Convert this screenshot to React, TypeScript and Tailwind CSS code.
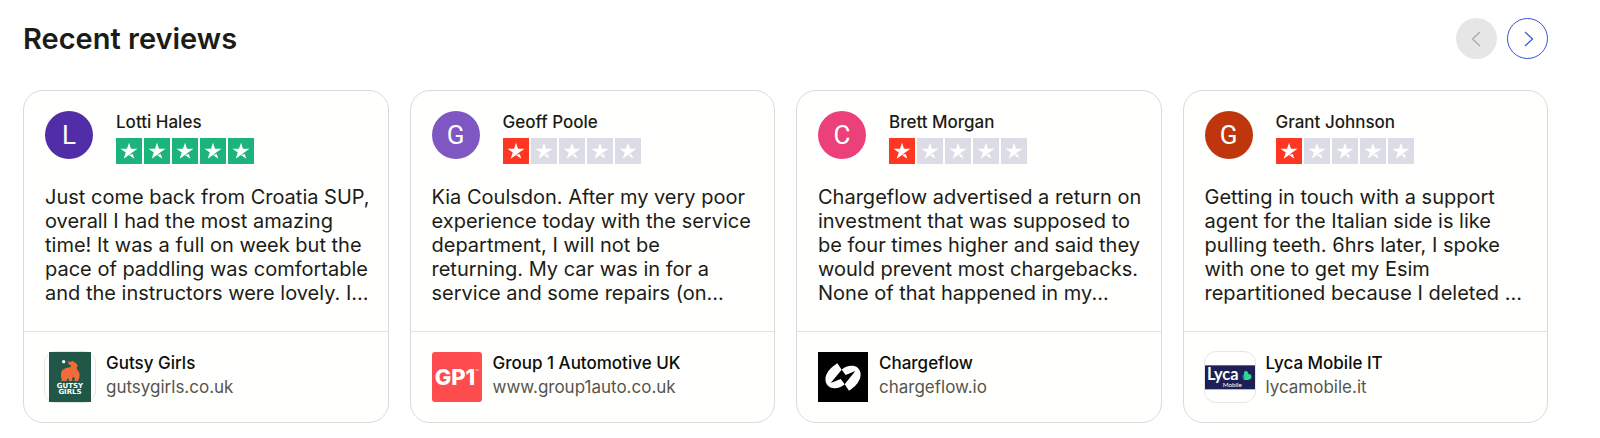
import { ReactNode } from "react";

function GutsyGirlsLogo() {
  return (
    <svg viewBox="0 0 150 150" className="size-full" aria-hidden="true">
      <rect x="12" width="126" height="150" fill="#205746" />
      <circle cx="56" cy="29" r="5" fill="#fff" />
      <path
        d="M69 28 L76 30 L82 27 L88 30 L95 35 L98 41 L95 47 L97 53 L102 60 L104 68 L103 77 L99 87 L87 87 L90 79 L86 75 L81 79 L82 87 L71 87 L72 80 L67 80 L64 87 L49 87 L50 80 L48 74 L48 62 L53 53 L63 48 L76 46 L79 41 L71 37 Z"
        fill="#f26b3a"
      />
      <text x="75" y="109" textAnchor="middle" fontFamily="'DejaVu Sans', sans-serif" fontWeight="700" fontSize="21" fill="#fff">GUTSY</text>
      <text x="75" y="127" textAnchor="middle" fontFamily="'DejaVu Sans', sans-serif" fontWeight="700" fontSize="21" fill="#fff">GIRLS</text>
    </svg>
  );
}

function Group1Logo() {
  return (
    <svg viewBox="0 0 150 150" className="size-full" aria-hidden="true">
      <rect width="150" height="150" rx="9" fill="#ff4c4f" />
      <text x="69" y="100" textAnchor="middle" fontFamily="Inter, sans-serif" fontWeight="800" fontSize="66" fill="#fff">GP1</text>
      <path d="M131 54h10" stroke="#fff" strokeWidth="2" />
    </svg>
  );
}

function ChargeflowLogo() {
  return (
    <svg viewBox="0 0 150 150" className="size-full" aria-hidden="true">
      <rect width="150" height="150" fill="#000" />
      <path d="M58 34 L71 53 L38 93 L68 81 L80 97 C66 110 44 113 32 103 C22 94 20 80 25 68 C32 52 45 42 58 34 Z" fill="#fff" />
      <path d="M93 116 L80 97 L112 57 L83 69 L71 53 C84 40 107 37 119 47 C129 56 130 70 125 82 C118 98 106 108 93 116 Z" fill="#fff" />
    </svg>
  );
}

function LycaLogo() {
  return (
    <svg viewBox="0 0 150 150" className="size-full" aria-hidden="true">
      <rect y="40" width="150" height="72" fill="#1e1f55" />
      <text x="6" y="84" fontFamily="Lato, sans-serif" fontWeight="700" fontSize="49" fill="#fff">Lyca</text>
      <text x="53" y="104" fontFamily="Lato, sans-serif" fontSize="19" fill="#fff">Mobile</text>
      <path d="M118 66 C109 68 111 80 117 84 L129 84 Z" fill="#1a6fe0" />
      <path d="M117 61 C121 53 130 57 130 66 C138 64 143 74 137 80 C133 84 125 84 118 84 Z" fill="#2bd98a" />
    </svg>
  );
}

type Review = {
  name: string;
  initial: string;
  avatar: string;
  rating: number;
  text: string;
  company: string;
  site: string;
  logo: ReactNode;
  framed: boolean;
};

const reviews: Review[] = [
  {
    name: "Lotti Hales",
    initial: "L",
    avatar: "bg-[#512da8]",
    rating: 5,
    text: "Just come back from Croatia SUP,\noverall I had the most amazing\ntime! It was a full on week but the\npace of paddling was comfortable\nand the instructors were lovely. I...",
    company: "Gutsy Girls",
    site: "gutsygirls.co.uk",
    logo: <GutsyGirlsLogo />,
    framed: true,
  },
  {
    name: "Geoff Poole",
    initial: "G",
    avatar: "bg-[#7e57c2]",
    rating: 1,
    text: "Kia Coulsdon. After my very poor\nexperience today with the service\ndepartment, I will not be\nreturning. My car was in for a\nservice and some repairs (on...",
    company: "Group 1 Automotive UK",
    site: "www.group1auto.co.uk",
    logo: <Group1Logo />,
    framed: false,
  },
  {
    name: "Brett Morgan",
    initial: "C",
    avatar: "bg-[#ec407a]",
    rating: 1,
    text: "Chargeflow advertised a return on\ninvestment that was supposed to\nbe four times higher and said they\nwould prevent most chargebacks.\nNone of that happened in my...",
    company: "Chargeflow",
    site: "chargeflow.io",
    logo: <ChargeflowLogo />,
    framed: false,
  },
  {
    name: "Grant Johnson",
    initial: "G",
    avatar: "bg-[#bf360c]",
    rating: 1,
    text: "Getting in touch with a support\nagent for the Italian side is like\npulling teeth. 6hrs later, I spoke\nwith one to get my Esim\nrepartitioned because I deleted ...",
    company: "Lyca Mobile IT",
    site: "lycamobile.it",
    logo: <LycaLogo />,
    framed: true,
  },
];

function Stars({ rating }: { rating: number }) {
  const active = rating >= 4 ? "bg-[#1bb57b]" : "bg-[#ff3722]";

  return (
    <div className="flex gap-[2px]" role="img" aria-label={`Rated ${rating} out of 5 stars`}>
      {[1, 2, 3, 4, 5].map((n) => (
        <span key={n} className={`size-[26px] ${n <= rating ? active : "bg-[#dcdce6]"}`}>
          <svg viewBox="0 0 26 26" className="size-full" fill="#fff">
            <path d="M13 4.700L15 10.800H21.500L16.200 14.600L13 16.900L7.700 20.700L9.800 14.600L4.500 10.800H11Z" />
            <path d="M13 16.900L16.700 15.900L18.300 20.700Z" />
          </svg>
        </span>
      ))}
    </div>
  );
}

function ReviewCard({ review }: { review: Review }) {
  return (
    <article className="min-w-0 rounded-[20px] border border-[#dfd9d5] bg-[#fffffd]">
      <div className="px-[21px] pt-5 pb-[26px]">
        <div className="flex">
          <div className={`flex size-12 shrink-0 items-center justify-center rounded-full font-[Roboto,sans-serif] text-[26px] text-white ${review.avatar}`}>
            {review.initial}
          </div>
          <div className="ml-[23px]">
            <h3 className="text-[17px] leading-[22px] font-medium">{review.name}</h3>
            <div className="mt-[5px]">
              <Stars rating={review.rating} />
            </div>
          </div>
        </div>
        <p className="mt-[21px] text-[20px] leading-6 whitespace-pre">{review.text}</p>
      </div>
      <a href={`https://${review.site}`} className="flex gap-[10px] border-t border-[#e5e3e1] px-5 py-[19px]">
        <div className={`size-[52px] shrink-0 rounded-[12px] border ${review.framed ? "border-[#e8e6e4] bg-white" : "border-transparent"}`}>
          {review.logo}
        </div>
        <div className="text-[17px] leading-6">
          <div className="font-medium text-[#0d0d0a]">{review.company}</div>
          <div className="text-[#55554d]">{review.site}</div>
        </div>
      </a>
    </article>
  );
}

export default function App() {
  return (
    <section className="bg-white pt-[18px] pr-[52px] pb-[15px] pl-[23px] font-[Inter,sans-serif] text-[#1c1c17]">
      <div className="flex items-center justify-between">
        <h2 className="text-[29px] leading-10 font-semibold">Recent reviews</h2>
        <div className="flex gap-[10px]">
          <button type="button" disabled aria-label="Previous reviews" className="flex size-[41px] items-center justify-center rounded-full bg-[#e6e6e6] text-[#a8a8a8]">
            <svg viewBox="0 0 16 16" className="size-4" fill="none" stroke="currentColor" strokeWidth="1.200">
              <path d="M11 1L3.500 8l7.500 7" />
            </svg>
          </button>
          <button type="button" aria-label="Next reviews" className="flex size-[41px] items-center justify-center rounded-full border border-[#3455d1] text-[#3455d1]">
            <svg viewBox="0 0 16 16" className="size-4" fill="none" stroke="currentColor" strokeWidth="1.200">
              <path d="M5 1l7.500 7L5 15" />
            </svg>
          </button>
        </div>
      </div>
      <div className="mt-[31px] grid grid-cols-4 gap-[21px]">
        {reviews.map((review) => (
          <ReviewCard key={review.name} review={review} />
        ))}
      </div>
    </section>
  );
}
